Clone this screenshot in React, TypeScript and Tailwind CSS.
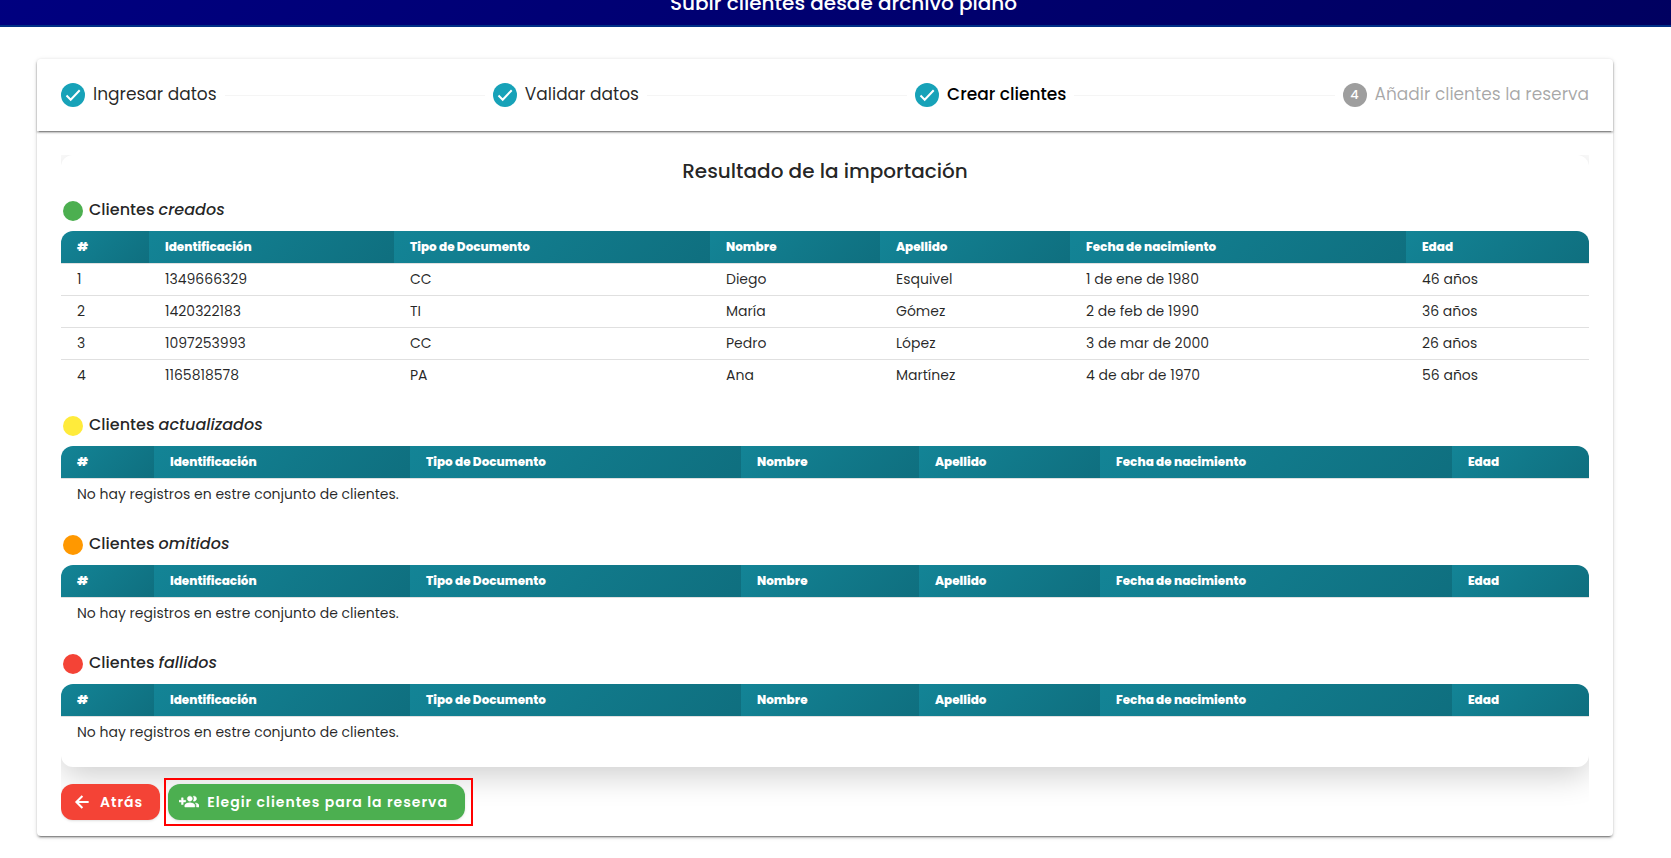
import { Fragment } from "react";
import type { ReactNode } from "react";

type Client = {
  id: string;
  docType: string;
  firstName: string;
  lastName: string;
  birthDate: string;
  age: string;
};

type ClientGroup = {
  name: string;
  dot: string;
  columns: number[];
  clients: Client[];
};

type Step = {
  label: string;
  state: "done" | "current" | "pending";
};

const HEADERS = [
  "#",
  "Identificación",
  "Tipo de Documento",
  "Nombre",
  "Apellido",
  "Fecha de nacimiento",
  "Edad",
];

// relative column widths
const FILLED_COLUMNS = [88, 245, 316, 170, 190, 336, 183];
const EMPTY_COLUMNS = [93, 256, 331, 178, 181, 352, 137];

const STEPS: Step[] = [
  { label: "Ingresar datos", state: "done" },
  { label: "Validar datos", state: "done" },
  { label: "Crear clientes", state: "current" },
  { label: "Añadir clientes la reserva", state: "pending" },
];

const GROUPS: ClientGroup[] = [
  {
    name: "creados",
    dot: "bg-[#4caf50]",
    columns: FILLED_COLUMNS,
    clients: [
      { id: "1349666329", docType: "CC", firstName: "Diego", lastName: "Esquivel", birthDate: "1 de ene de 1980", age: "46 años" },
      { id: "1420322183", docType: "TI", firstName: "María", lastName: "Gómez", birthDate: "2 de feb de 1990", age: "36 años" },
      { id: "1097253993", docType: "CC", firstName: "Pedro", lastName: "López", birthDate: "3 de mar de 2000", age: "26 años" },
      { id: "1165818578", docType: "PA", firstName: "Ana", lastName: "Martínez", birthDate: "4 de abr de 1970", age: "56 años" },
    ],
  },
  { name: "actualizados", dot: "bg-[#ffeb3b]", columns: EMPTY_COLUMNS, clients: [] },
  { name: "omitidos", dot: "bg-[#ff9800]", columns: EMPTY_COLUMNS, clients: [] },
  { name: "fallidos", dot: "bg-[#f44336]", columns: EMPTY_COLUMNS, clients: [] },
];

const STEP_TEXT = {
  done: "text-black/85",
  current: "font-medium text-black",
  pending: "text-black/35",
};

function BackIcon() {
  return (
    <svg viewBox="0 0 24 24" className="size-5 shrink-0" fill="none" stroke="currentColor" strokeWidth="2.5" aria-hidden="true">
      <path d="M20 12H5.5M12.5 4.8L5.3 12l7.2 7.2" />
    </svg>
  );
}

function GroupAddIcon() {
  return (
    <svg viewBox="0 0 24 24" className="size-5 shrink-0" fill="currentColor" stroke="currentColor" strokeWidth="0.6" aria-hidden="true">
      <path d="M8 10H5V7H3v3H0v2h3v3h2v-3h3v-2zm10 1c1.66 0 2.99-1.34 2.99-3S19.66 5 18 5c-.32 0-.63.05-.91.14.57.81.9 1.79.9 2.86s-.34 2.04-.9 2.86c.28.09.59.14.91.14zm-5 0c1.66 0 2.99-1.34 2.99-3S14.66 5 13 5c-1.66 0-3 1.34-3 3s1.34 3 3 3zm6.62 2.16c.83.73 1.38 1.66 1.38 2.84v2h3v-2c0-1.54-2.37-2.49-4.38-2.84zM13 13c-2 0-6 1-6 3v2h12v-2c0-2-4-3-6-3z" />
    </svg>
  );
}

function CheckIcon() {
  return (
    <svg viewBox="0 0 24 24" className="size-6" fill="none" stroke="currentColor" strokeWidth="2" aria-hidden="true">
      <path d="M5.5 12.5l4.2 4.2L18.7 7.2" />
    </svg>
  );
}

function Stepper() {
  return (
    <ol className="flex h-[72px] items-center rounded-t px-6 text-[17px] shadow-[0_3px_1px_-2px_rgba(0,0,0,0.3),0_2px_2px_0_rgba(0,0,0,0.2),0_1px_3px_0_rgba(0,0,0,0.12)]">
      {STEPS.map((step, idx) => (
        <Fragment key={step.label}>
          {idx > 0 && <li aria-hidden="true" className="mx-2 h-px flex-1 bg-black/4" />}
          <li className="flex items-center gap-2 whitespace-nowrap">
            <span
              className={`flex size-6 items-center justify-center rounded-full text-white ${
                step.state === "pending" ? "bg-[#9e9e9e]" : "bg-[#17a2b8]"
              }`}
            >
              {step.state === "pending" ? (
                <span className="text-[13px] font-medium">{idx + 1}</span>
              ) : (
                <CheckIcon />
              )}
            </span>
            <span className={STEP_TEXT[step.state]}>{step.label}</span>
          </li>
        </Fragment>
      ))}
    </ol>
  );
}

function Td({ children, colSpan }: { children: ReactNode; colSpan?: number }) {
  return (
    <td colSpan={colSpan} className="h-8 pl-4 text-left">
      {children}
    </td>
  );
}

function ClientsTable({ group }: { group: ClientGroup }) {
  const total = group.columns.reduce((sum, w) => sum + w, 0);
  return (
    <table className="w-full table-fixed border-collapse text-sm text-black/85">
      <colgroup>
        {group.columns.map((w, idx) => (
          <col key={HEADERS[idx]} style={{ width: `${(w / total) * 100}%` }} />
        ))}
      </colgroup>
      <thead>
        <tr>
          {HEADERS.map((h) => (
            <th
              key={h}
              className="h-8 bg-linear-135 from-[#138496] to-[#0f6f7f] pl-4 text-left text-xs font-extrabold text-white first:rounded-tl-xl last:rounded-tr-xl"
            >
              {h}
            </th>
          ))}
        </tr>
      </thead>
      <tbody>
        {group.clients.map((c, idx) => (
          <tr key={c.id} className="border-t border-black/12">
            <Td>{idx + 1}</Td>
            <Td>{c.id}</Td>
            <Td>{c.docType}</Td>
            <Td>{c.firstName}</Td>
            <Td>{c.lastName}</Td>
            <Td>{c.birthDate}</Td>
            <Td>{c.age}</Td>
          </tr>
        ))}
        {group.clients.length === 0 && (
          <tr className="border-t border-black/12">
            <Td colSpan={HEADERS.length}>No hay registros en estre conjunto de clientes.</Td>
          </tr>
        )}
      </tbody>
    </table>
  );
}

function GroupSection({ group }: { group: ClientGroup }) {
  return (
    <section className="pb-[19px]">
      <h3 className="mb-1 flex h-8 items-center gap-1.5 pl-0.5 text-base font-medium">
        <span className={`size-5 rounded-full ${group.dot}`} />
        <span className="pb-0.5">
          Clientes <em>{group.name}</em>
        </span>
      </h3>
      <ClientsTable group={group} />
    </section>
  );
}

export default function App() {
  return (
    <div className="bg-white font-['Poppins','Inter',sans-serif] text-black/87">
      <header className="-mt-[19px] flex h-[46px] items-center justify-center border-b-2 border-[#003087] bg-linear-135 from-[#000080] to-[#000060] pl-4">
        <h1 className="text-xl font-medium text-white">Subir clientes desde archivo plano</h1>
      </header>

      <main className="pt-8 pr-[58px] pb-5 pl-[37px]">
        <div className="rounded shadow-[0_3px_1px_-2px_rgba(0,0,0,0.3),0_2px_2px_0_rgba(0,0,0,0.2),0_1px_5px_0_rgba(0,0,0,0.12)]">
          <Stepper />

          <div className="px-6 pt-6 pb-4">
            {/* cuts the panel shadow at the sides and top, leaves room below for the highlight */}
            <div className="[clip-path:inset(0_0_-8px_0)]">
              <div className="rounded-xl bg-white shadow-[0_8px_32px_rgba(0,0,0,0.2)]">
                <h2 className="mb-2 text-center text-xl leading-8 font-medium">
                  Resultado de la importación
                </h2>
                {GROUPS.map((g) => (
                  <GroupSection key={g.name} group={g} />
                ))}
              </div>

              <div className="mt-[17px] flex gap-2 text-sm font-semibold tracking-[1px] text-white">
                <button
                  type="button"
                  className="flex h-9 items-center gap-2 rounded-xl bg-[#f44336] pr-[17px] pl-[11px] shadow"
                >
                  <BackIcon />
                  Atrás
                </button>
                <div className="relative">
                  <button
                    type="button"
                    className="flex h-9 items-center gap-2 rounded-xl bg-[#4caf50] pr-[17px] pl-[11px] shadow"
                  >
                    <GroupAddIcon />
                    Elegir clientes para la reserva
                  </button>
                  <span className="pointer-events-none absolute -inset-y-1.5 -right-2 -left-1 border-2 border-[#ff0000]" />
                </div>
              </div>
            </div>
          </div>
        </div>
      </main>
    </div>
  );
}
